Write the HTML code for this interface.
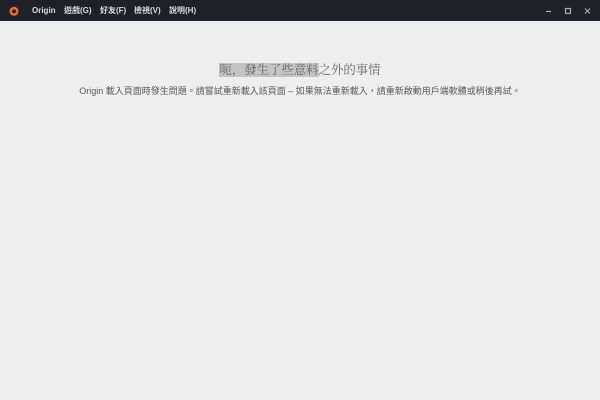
<!DOCTYPE html>
<html><head><meta charset="utf-8"><style>
html,body{margin:0;padding:0;width:600px;height:400px;background:#eeeeee;overflow:hidden;font-family:"Liberation Sans","Noto Sans CJK TC",sans-serif}
.bar{position:absolute;left:0;top:0;width:600px;height:21px;background:#1e2228}
.menu{position:absolute;top:0;height:21px;line-height:22px;color:#d8dadc;font-size:8px;font-weight:bold}
.t{position:absolute;left:0;width:600px;text-align:center}
.h{background:#c4c4c4}
</style></head><body>
<div class="bar">
<svg style="position:absolute;left:9px;top:6px" width="10" height="10" viewBox="0 0 10 10"><circle cx="5" cy="5.3" r="3.3" fill="none" stroke="#f56c2d" stroke-width="2.4"/><path d="M6.5 0.3 L7.5 2.4 L5.8 2" fill="#f56c2d"/></svg>
<span class="menu" style="left:32px">Origin</span>
<span class="menu" style="left:64px">遊戲(G)</span>
<span class="menu" style="left:100px">好友(F)</span>
<span class="menu" style="left:134px">檢視(V)</span>
<span class="menu" style="left:169px">說明(H)</span>
<svg style="position:absolute;left:540px;top:6px" width="55" height="10" viewBox="0 0 55 10"><path d="M6 5.5h5" stroke="#aab" stroke-width="1.2"/><rect x="25.5" y="2.5" width="5" height="5" fill="none" stroke="#aab" stroke-width="1.2"/><path d="M45 2.5l5 5M50 2.5l-5 5" stroke="#aab" stroke-width="1.2"/></svg>
</div>
<div class="t" style="top:62px;font-size:12.4px;color:#666;line-height:16px;font-family:'Liberation Serif','Noto Serif CJK SC',serif"><span class="h">呃，發生了些意料</span>之外的事情</div>
<div class="t" style="top:86px;font-size:9px;color:#5a5a5a;line-height:11px">Origin 載入頁面時發生問題。請嘗試重新載入該頁面 – 如果無法重新載入，請重新啟動用戶端軟體或稍後再試。</div>
</body></html>
